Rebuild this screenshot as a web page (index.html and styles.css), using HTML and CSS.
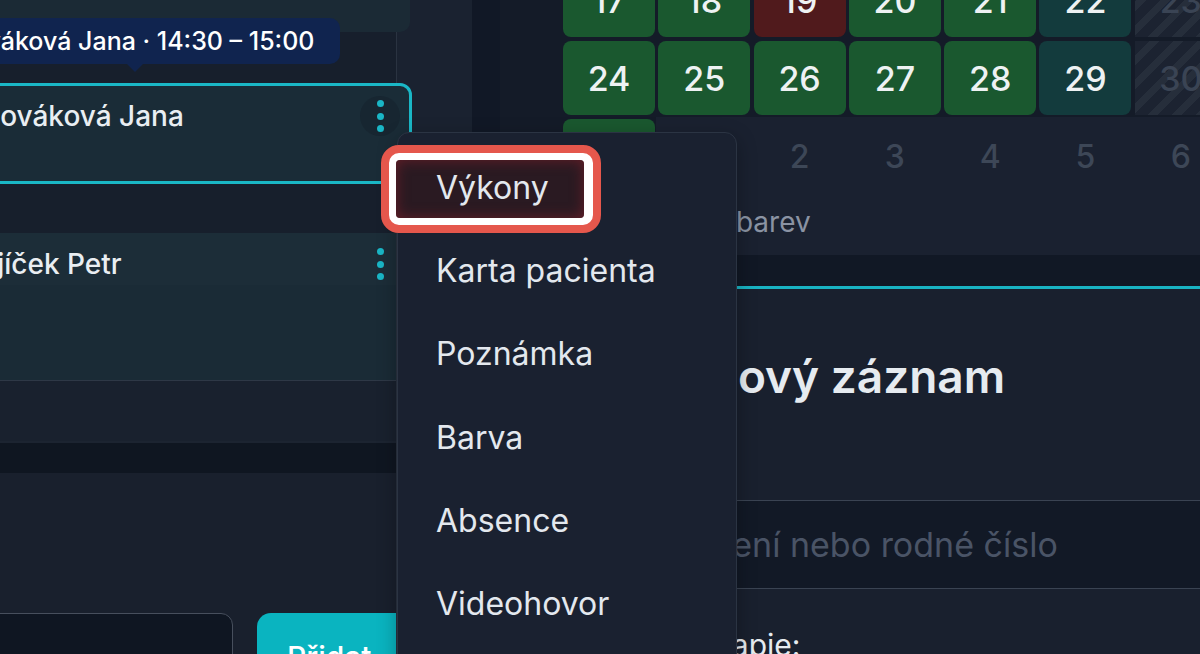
FILE: index.html
```html
<!DOCTYPE html>
<html lang="cs">
<head>
<meta charset="utf-8">
<title>Kalendář</title>
<link rel="stylesheet" href="styles.css">
</head>
<body>
<div class="app">
  <aside class="left">
    <div class="topcard"></div>
    <div class="card card-sel">
      <span class="name">Nováková Jana</span>
      <span class="kebab kebab-hover"><i></i><i></i><i></i></span>
    </div>
    <div class="card2">
      <div class="card2-head">
        <span class="name">Vojíček Petr</span>
        <span class="kebab kebab-narrow"><i></i><i></i><i></i></span>
      </div>
    </div>
    <div class="band"></div>
    <div class="band-dark"></div>
    <div class="bottom">
      <div class="field"></div>
      <button class="btn">Přidat</button>
    </div>
  </aside>
  <div class="mid"></div>
  <div class="gutter"></div>
  <main class="right">
    <div class="cal">
      <div class="grid">
        <div class="cell green">17</div>
        <div class="cell green">18</div>
        <div class="cell red">19</div>
        <div class="cell green">20</div>
        <div class="cell green">21</div>
        <div class="cell teal">22</div>
        <div class="cell hatch">23</div>
        <div class="cell green">24</div>
        <div class="cell green">25</div>
        <div class="cell green">26</div>
        <div class="cell green">27</div>
        <div class="cell green">28</div>
        <div class="cell teal">29</div>
        <div class="cell hatch">30</div>
        <div class="cell green">31</div>
        <div class="cell other">1</div>
        <div class="cell other">2</div>
        <div class="cell other">3</div>
        <div class="cell other">4</div>
        <div class="cell other">5</div>
        <div class="cell other">6</div>
      </div>
    </div>
    <div class="legend"><span class="legend-text">Legenda barev</span></div>
    <div class="strip"></div>
    <section class="form">
      <h2 class="title">Nový záznam</h2>
      <div class="search">Jméno, příjmení nebo rodné číslo</div>
      <div class="label">Terapie:</div>
    </section>
  </main>
</div>

<div class="tooltip">Nováková Jana · 14:30 – 15:00</div>

<ul class="menu">
  <li class="active"><span>Výkony</span></li>
  <li><span>Karta pacienta</span></li>
  <li><span>Poznámka</span></li>
  <li><span>Barva</span></li>
  <li><span>Absence</span></li>
  <li><span>Videohovor</span></li>
</ul>
</body>
</html>
```
FILE: styles.css
```css
html, body {
  margin: 0;
  padding: 0;
  width: 1200px;
  height: 654px;
  overflow: hidden;
  background: #151c28;
  font-family: Inter, "Noto Sans", "Liberation Sans", sans-serif;
  color: #e9eef2;
}

.app {
  display: flex;
  height: 654px;
}

/* ---------- left column ---------- */
.left {
  position: relative;
  z-index: 1;
  width: 396px;
  flex: none;
  border-right: 1px solid #2a3341;
  background: #171f2c;
  display: flex;
  flex-direction: column;
}

.topcard {
  flex: none;
  margin-left: -40px;
  width: 450px;
  height: 32px;
  background: #1b2a35;
  border-radius: 0 0 10px 10px;
}

.card {
  flex: none;
  box-sizing: border-box;
  display: flex;
  justify-content: space-between;
  align-items: flex-start;
}

.card-sel {
  margin-top: 51px;
  margin-left: -40px;
  width: 452px;
  height: 101px;
  border: 3px solid #1ab7c6;
  border-radius: 12px;
  background: #1a2c37;
  padding: 10px 9px 0 16px;
}

.name {
  font-size: 28px;
  line-height: 40px;
  font-weight: 500;
  color: #e9eef2;
  white-space: nowrap;
}

.kebab {
  width: 40px;
  height: 40px;
  border-radius: 50%;
  display: flex;
  flex-direction: column;
  align-items: center;
  justify-content: center;
  gap: 5.5px;
}

.kebab i {
  display: block;
  width: 7px;
  height: 7px;
  border-radius: 50%;
  background: #1ab6c6;
}

.kebab-hover {
  background: #172631;
}

.kebab-narrow {
  width: 32px;
}

.card2 {
  flex: none;
  margin-top: 49px;
  margin-left: -40px;
  width: 436px;
  height: 148px;
  box-sizing: border-box;
  background: #1a2b36;
  border-bottom: 1px solid #2e3846;
}

.card2-head {
  height: 52px;
  box-sizing: border-box;
  display: flex;
  justify-content: space-between;
  align-items: flex-start;
  padding: 11px 0 0 2px;
  background: #1c2d38;
}

.band {
  flex: none;
  height: 60px;
  background: #19212e;
  border-bottom: 2px solid #1c2431;
}

.band-dark {
  flex: none;
  height: 30px;
  background: #0f1621;
}

.bottom {
  flex: 1;
  background: #19202d;
  padding-top: 140px;
  display: flex;
  gap: 24px;
  overflow: hidden;
}

.field {
  flex: none;
  margin-left: -40px;
  width: 273px;
  height: 70px;
  box-sizing: border-box;
  background: #0f1622;
  border: 1px solid #474f5d;
  border-radius: 12px;
}

.btn {
  flex: none;
  width: 170px;
  height: 70px;
  border: 0;
  border-radius: 14px;
  background: #0ab4c0;
  color: #ffffff;
  font-family: inherit;
  font-size: 30px;
  font-weight: 500;
  text-align: left;
  padding: 18px 0 0 30px;
  line-height: 36px;
  align-self: flex-start;
  box-sizing: border-box;
}

/* ---------- middle ---------- */
.mid {
  width: 75px;
  flex: none;
  background: #1a2230;
}

.gutter {
  width: 28px;
  flex: none;
  background: #111826;
}

/* ---------- right ---------- */
.right {
  flex: 1;
  background: #1a2130;
  display: flex;
  flex-direction: column;
  min-width: 0;
}

.cal {
  background: #141b28;
  padding-left: 63px;
  height: 193px;
  overflow: hidden;
  flex: none;
}

.grid {
  margin-top: -37px;
  display: grid;
  grid-template-columns: repeat(7, 92px);
  grid-auto-rows: 74px;
  column-gap: 3.3px;
  row-gap: 4px;
}

.cell {
  border-radius: 8px;
  display: flex;
  align-items: center;
  justify-content: center;
  font-size: 34px;
  font-weight: 500;
  color: #eef2f3;
}

.green { background: #1a582f; }
.red { background: #501a1c; }
.teal { background: #133b3d; }

.hatch {
  border-radius: 0;
  color: #3a4454;
  background: repeating-linear-gradient(135deg, #1c2331 0 10px, #262e3b 10px 17px);
}

.other {
  border-radius: 0;
  background: #1a2130;
  color: #3d4757;
  font-size: 32px;
  outline: 2px solid #1a2130;
  box-shadow: 0 0 0 2px #1c2332;
}

.legend {
  flex: none;
  height: 62px;
  display: flex;
  align-items: center;
  padding-left: 113px;
  padding-bottom: 4px;
  box-sizing: border-box;
}

.legend-text {
  font-size: 28px;
  color: #8a93a3;
  white-space: nowrap;
}

.strip {
  flex: none;
  height: 31px;
  background: #111825;
}

.form {
  flex: 1;
  border-top: 3px solid #19b3c3;
  background: #19202e;
}

.title {
  margin: 59px 0 0 203px;
  font-size: 46px;
  line-height: 56px;
  font-weight: 600;
  color: #e6ebf0;
  white-space: nowrap;
}

.search {
  margin-top: 96px;
  height: 89px;
  box-sizing: border-box;
  border-top: 1px solid #3a4352;
  border-bottom: 1px solid #3a4352;
  background: #121926;
  display: flex;
  align-items: center;
  padding-left: 23px;
  font-size: 34px;
  color: #4a5466;
  white-space: nowrap;
}

.label {
  margin: 38px 0 0 186px;
  font-size: 30px;
  line-height: 36px;
  color: #e6ebf0;
}

/* ---------- overlays ---------- */
.tooltip {
  position: absolute;
  z-index: 2;
  left: -60px;
  top: 18px;
  width: 400px;
  height: 46px;
  box-sizing: border-box;
  padding-left: 13px;
  background: #10244f;
  border-radius: 10px;
  font-size: 25px;
  line-height: 46px;
  font-weight: 500;
  color: #ffffff;
  white-space: nowrap;
}

.tooltip::after {
  content: "";
  position: absolute;
  left: 187px;
  bottom: -8px;
  border-top: 8px solid #10244f;
  border-left: 8px solid transparent;
  border-right: 8px solid transparent;
}

.menu {
  position: absolute;
  z-index: 3;
  left: 397px;
  top: 132px;
  width: 340px;
  height: 600px;
  box-sizing: border-box;
  margin: 0;
  padding: 13px 0 0 0;
  list-style: none;
  background: #1a2130;
  border: 1px solid #2b3443;
  border-radius: 12px;
  box-shadow: 0 6px 20px rgba(0, 0, 0, 0.3);
}

.menu li {
  position: relative;
  height: 83.2px;
  display: flex;
  align-items: center;
  padding-left: 38px;
  font-size: 32px;
  color: #e3e8ee;
  white-space: nowrap;
}

.menu li span {
  position: relative;
  z-index: 1;
}

/* annotation ring around the active item */
.menu li.active::before {
  content: "";
  position: absolute;
  z-index: 0;
  left: -17px;
  top: -1px;
  width: 220px;
  height: 88px;
  box-sizing: border-box;
  border: 8px solid #e5574c;
  border-radius: 18px;
  background: #ffffff;
}

.menu li.active::after {
  content: "";
  position: absolute;
  z-index: 0;
  left: -2px;
  top: 14px;
  width: 188px;
  height: 58px;
  border-radius: 4px;
  background: #2a1a22;
  box-shadow: inset 0 0 14px rgba(110, 30, 40, 0.9);
}
```
